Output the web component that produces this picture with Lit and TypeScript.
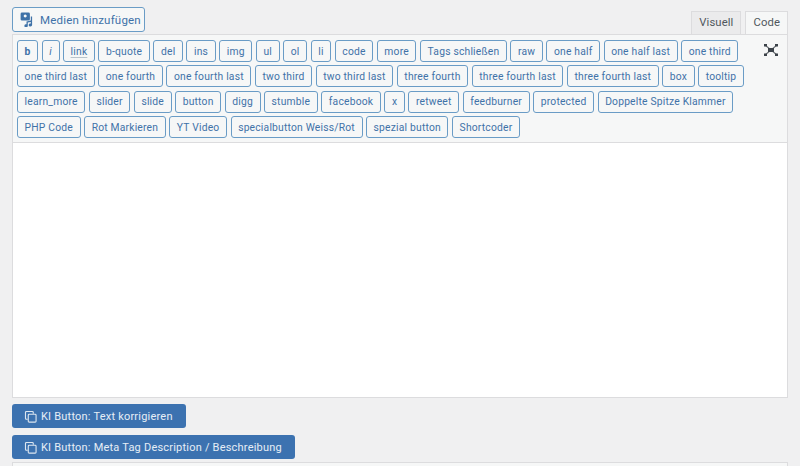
import { LitElement, html, css, svg } from "lit";
import { customElement } from "lit/decorators.js";

const rows: string[][] = [
  ["b", "i", "link", "b-quote", "del", "ins", "img", "ul", "ol", "li", "code", "more", "Tags schließen", "raw", "one half", "one half last", "one third"],
  ["one third last", "one fourth", "one fourth last", "two third", "two third last", "three fourth", "three fourth last", "three fourth last", "box", "tooltip"],
  ["learn_more", "slider", "slide", "button", "digg", "stumble", "facebook", "x", "retweet", "feedburner", "protected", "Doppelte Spitze Klammer"],
  ["PHP Code", "Rot Markieren", "YT Video", "specialbutton Weiss/Rot", "spezial button", "Shortcoder"],
];

const copyIcon = svg`<svg class="copy" viewBox="0 0 14 14" width="13" height="13" fill="none" stroke="#dce6f0" stroke-width="1.2"><path d="M4 10H2.600a1 1 0 0 1-1-1V2.600a1 1 0 0 1 1-1H9a1 1 0 0 1 1 1V4"/><rect x="4.600" y="4.600" width="8.400" height="8.400" rx="1"/></svg>`;

@customElement("app-root")
export class AppRoot extends LitElement {
  static styles = css`
    :host { display: block; width: 800px; height: 466px; overflow: hidden; background: #f0f0f1; font-family: Roboto, "Liberation Sans", sans-serif; color: #2271b1; }
    .wrap { padding: 7px 12px 0; display: flex; flex-direction: column; }
    .top { display: flex; justify-content: space-between; align-items: flex-end; height: 27px; }
    .media { display: flex; align-items: center; gap: 5px; box-sizing: border-box; height: 25px; width: 133px; margin-bottom: 2px; padding-left: 7px; border: 1px solid #6a9cc6; border-radius: 3px; background: #f6f7f7; font-size: 11.5px; letter-spacing: .2px; color: #3f72a8; }
    .tabs { display: flex; gap: 4px; }
    .tab { box-sizing: border-box; height: 23px; padding: 4px 7px 0; font-size: 11.3px; letter-spacing: .1px; color: #50575e; background: #ebebec; border: 1px solid #dcdcde; border-bottom: none; }
    .tab.on { background: #f6f7f7; margin-bottom: -1px; height: 24px; }
    .editor { border: 1px solid #dcdcde; background: #fff; height: 364px; box-sizing: border-box; display: flex; flex-direction: column; }
    .bar { background: #f6f7f7; height: 108px; box-sizing: border-box; border-bottom: 1px solid #dcdcde; padding: 5px 0 0 4px; display: flex; flex-direction: column; gap: 3.35px; position: relative; flex: none; }
    .row { display: flex; gap: 3.5px; }
    .q { box-sizing: border-box; height: 22px; padding: 0 6.6px; display: flex; align-items: center; border: 1px solid #6a9cc6; border-radius: 3px; background: #f6f7f7; font-size: 10.3px; letter-spacing: .2px; color: #3f72a8; white-space: nowrap; }
    .q.b { font-weight: 700; }
    .q.i { font-style: italic; }
    .q.u span { text-decoration: underline; text-decoration-color: #b8c4cc; text-underline-offset: 2px; }
    .full { position: absolute; right: 9px; top: 9px; }
    .ki { display: flex; align-items: center; gap: 4px; box-sizing: border-box; height: 24px; padding: 0 13px 0 12px; width: fit-content; background: #3c72b0; border-radius: 3px; color: #e6eef6; font-size: 11px; letter-spacing: .21px; }
    .k1 { margin-top: 6px; }
    .k2 { margin-top: 7px; }
    .panel { margin-top: 3px; height: 20px; border: 1px solid #dcdcde; background: #f6f7f7; }
  `;

  render() {
    return html`<div class="wrap">
      <div class="top">
        <div class="media">
          <svg width="15" height="15" viewBox="0 0 15 15" fill="#3f72a8"><path fill-rule="evenodd" d="M2 .6h6.500a1.400 1.400 0 0 1 1.400 1.400v5.200a1.400 1.400 0 0 1-1.400 1.400H2A1.400 1.400 0 0 1 .6 7.200V2A1.400 1.400 0 0 1 2 .6zm3.200 1.800a1.500 1.500 0 1 0 .01 0z"/><path d="M6.500 12.300a1.700 1.500 0 1 0 1.300 1.400V10.600l3-.6v1.500a1.700 1.500 0 1 0 1.300 1.400V4.500h-1.300v4l-4.300.9z"/></svg>
          <span>Medien hinzufügen</span>
        </div>
        <div class="tabs"><div class="tab">Visuell</div><div class="tab on">Code</div></div>
      </div>
      <div class="editor">
        <div class="bar">
          ${rows.map((r) => html`<div class="row">${r.map((t) => html`<div class="q ${t === "b" ? "b" : t === "i" ? "i" : t === "link" ? "u" : ""}"><span>${t}</span></div>`)}</div>`)}
          <svg class="full" width="14" height="12" viewBox="0 0 14 12" fill="#3c434a"><path d="M1 1 13 11M13 1 1 11" stroke="#6b7075" stroke-width="1.100" fill="none"/><rect x="4" y="4" width="6" height="4"/><rect x="0" y="0" width="3" height="2.500"/><rect x="11" y="0" width="3" height="2.500"/><rect x="0" y="9.500" width="3" height="2.500"/><rect x="11" y="9.500" width="3" height="2.500"/></svg>
        </div>
      </div>
      <div class="ki k1">${copyIcon}<span>KI Button: Text korrigieren</span></div>
      <div class="ki k2">${copyIcon}<span>KI Button: Meta Tag Description / Beschreibung</span></div>
      <div class="panel"></div>
    </div>`;
  }
}
